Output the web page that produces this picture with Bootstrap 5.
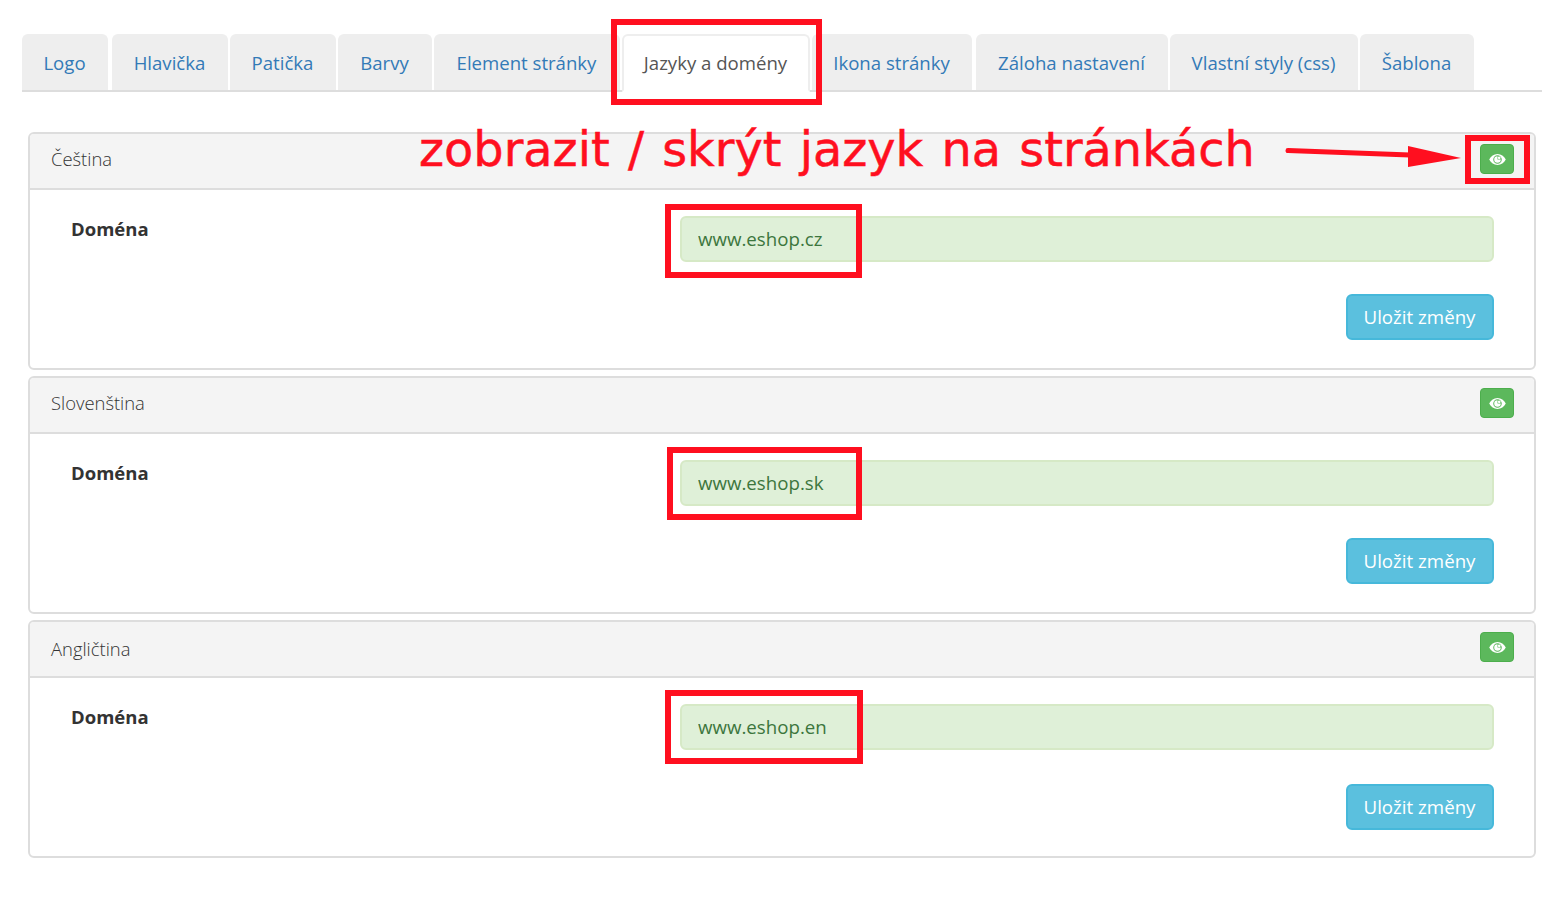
<!DOCTYPE html>
<html lang="cs">
<head>
<meta charset="utf-8">
<title>Jazyky a domény</title>
<link href="https://cdn.jsdelivr.net/npm/bootstrap@5.3.0/dist/css/bootstrap.min.css" rel="stylesheet">
<style>
body{font-family:"Open Sans",sans-serif;font-size:18.7px;color:#333;background:#fff;position:relative;height:900px;overflow:hidden}
.tabs-wrap{padding:34px 22px 0 22px}
.tabbar{border-bottom:2px solid #ddd;gap:2px;height:58px}
.tabbar .nav-link{height:58px;margin-bottom:-2px;background:#eee;color:#337ab7;border:0;border-bottom:2px solid #ddd;border-radius:6px 6px 0 0;padding:2px 1px 0 0;display:flex;align-items:center;justify-content:center;font-size:18.6px;line-height:1}
.tabbar .nav-link.active{background:#fff;color:#555;border:2px solid #eee;border-bottom:2px solid #fff;padding:0 1px 0 0}
.tab-w86{width:86px}.tab-w116{width:116px;margin-left:2px}.tab-w106{width:106px}.tab-w94{width:94px}.tab-w186{width:186px}.tab-w188{width:188px}.tab-w160{width:160px}.tab-w192{width:192px;margin-left:2px}.tab-w114{width:114px}
.panels{padding:40px 28px 0 28px;display:flex;flex-direction:column;gap:6px}
.lang-panel{height:238px;border:2px solid #ddd;border-radius:6px;overflow:hidden}
.lang-head{height:56px;background:#f4f4f4;border-bottom:2px solid #ddd;padding:0 20px 4px 21px;font-size:18.4px;color:#333;font-weight:300}
.lang-low .lang-title{position:relative;top:2px}
.lang-low .save-row{margin-top:34px}
.eye-btn{width:34px;height:30px;padding:0;background:#5cb85c;border:1px solid #4cae4c;border-radius:4px;display:flex;align-items:center;justify-content:center}
.lang-body{padding:26px 40px 0 41px}
.dom-label{flex:0 0 609px;font-weight:700;font-size:18.5px;line-height:26px}
.dom-field{height:46px;background:#dff0d8;border:2px solid #d6e9c6;border-radius:6px;color:#3c763d;font-size:18.7px;padding:0 16px 2px}
.save-row{margin-top:32px}
.save-btn{width:148px;height:46px;padding:0 1px 0 0;background:#5bc0de;border:2px solid #46b8da;border-radius:6px;color:#fff;font-size:18.7px}
.note{position:absolute;left:419px;top:114px;color:#ff0f1f;font-family:"DejaVu Sans",sans-serif;font-size:47.8px;word-spacing:3px;-webkit-text-stroke:.5px #ff0f1f;line-height:72px;white-space:nowrap}
.redbox{position:absolute;border:6px solid #ff0f1f}
.rb-tab{left:611px;top:19px;width:211px;height:86px}
.rb-eye{left:1465px;top:135px;width:65px;height:49px}
.rb-d1{left:665px;top:204px;width:197px;height:74px}
.rb-d2{left:667px;top:447px;width:195px;height:73px}
.rb-d3{left:665px;top:690px;width:198px;height:74px}
.arrow-note{position:absolute;left:1280px;top:140px}
</style>
</head>
<body>
<svg width="0" height="0" class="position-absolute"><defs><symbol id="eye" viewBox="0 0 16 12"><path fill="#fff" fill-rule="evenodd" d="M8 .8C4.600.8 1.800 3 .2 6c1.600 3 4.400 5.200 7.800 5.200s6.200-2.200 7.800-5.200C14.200 3 11.400.8 8 .8zM8 2a4 4 0 1 1 0 8 4 4 0 0 1 0-8z"/><path fill="#fff" fill-rule="evenodd" d="M8 2.900a3.100 3.100 0 1 0 3.100 3.100H8z"/><circle cx="9.600" cy="4.400" r="1.300" fill="#fff"/></symbol></defs></svg>
<div class="tabs-wrap">
<ul class="nav nav-tabs tabbar flex-nowrap">
<li class="nav-item"><a class="nav-link tab-w86" href="#">Logo</a></li>
<li class="nav-item"><a class="nav-link tab-w116" href="#">Hlavička</a></li>
<li class="nav-item"><a class="nav-link tab-w106" href="#">Patička</a></li>
<li class="nav-item"><a class="nav-link tab-w94" href="#">Barvy</a></li>
<li class="nav-item"><a class="nav-link tab-w186" href="#">Element stránky</a></li>
<li class="nav-item"><a class="nav-link active tab-w188" href="#">Jazyky a domény</a></li>
<li class="nav-item"><a class="nav-link tab-w160" href="#">Ikona stránky</a></li>
<li class="nav-item"><a class="nav-link tab-w192" href="#">Záloha nastavení</a></li>
<li class="nav-item"><a class="nav-link tab-w188" href="#">Vlastní styly (css)</a></li>
<li class="nav-item"><a class="nav-link tab-w114" href="#">Šablona</a></li>
</ul>
</div>
<div class="panels">
<section class="lang-panel">
<div class="lang-head d-flex align-items-center justify-content-between"><span class="lang-title">Čeština</span>
<button class="eye-btn" type="button" aria-label="Zobrazit"><svg width="17" height="13"><use href="#eye"/></svg></button></div>
<div class="lang-body">
<div class="d-flex"><div class="dom-label">Doména</div><input class="form-control dom-field" value="www.eshop.cz"></div>
<div class="d-flex justify-content-end save-row"><button class="btn save-btn" type="button">Uložit změny</button></div>
</div>
</section>
<section class="lang-panel">
<div class="lang-head d-flex align-items-center justify-content-between"><span class="lang-title">Slovenština</span>
<button class="eye-btn" type="button" aria-label="Zobrazit"><svg width="17" height="13"><use href="#eye"/></svg></button></div>
<div class="lang-body">
<div class="d-flex"><div class="dom-label">Doména</div><input class="form-control dom-field" value="www.eshop.sk"></div>
<div class="d-flex justify-content-end save-row"><button class="btn save-btn" type="button">Uložit změny</button></div>
</div>
</section>
<section class="lang-panel lang-low">
<div class="lang-head d-flex align-items-center justify-content-between"><span class="lang-title">Angličtina</span>
<button class="eye-btn" type="button" aria-label="Zobrazit"><svg width="17" height="13"><use href="#eye"/></svg></button></div>
<div class="lang-body">
<div class="d-flex"><div class="dom-label">Doména</div><input class="form-control dom-field" value="www.eshop.en"></div>
<div class="d-flex justify-content-end save-row"><button class="btn save-btn" type="button">Uložit změny</button></div>
</div>
</section>
</div>
<div class="note">zobrazit / skrýt jazyk na stránkách</div>
<svg class="arrow-note" width="190" height="36" viewBox="1280 140 190 36"><path d="M1288 150.500 1410 155" stroke="#ff0f1f" stroke-width="5" stroke-linecap="round" fill="none"/><path d="M1408 146 1461 158 1408 167z" fill="#ff0f1f"/></svg>
<div class="redbox rb-tab"></div>
<div class="redbox rb-eye"></div>
<div class="redbox rb-d1"></div>
<div class="redbox rb-d2"></div>
<div class="redbox rb-d3"></div>
</body>
</html>
